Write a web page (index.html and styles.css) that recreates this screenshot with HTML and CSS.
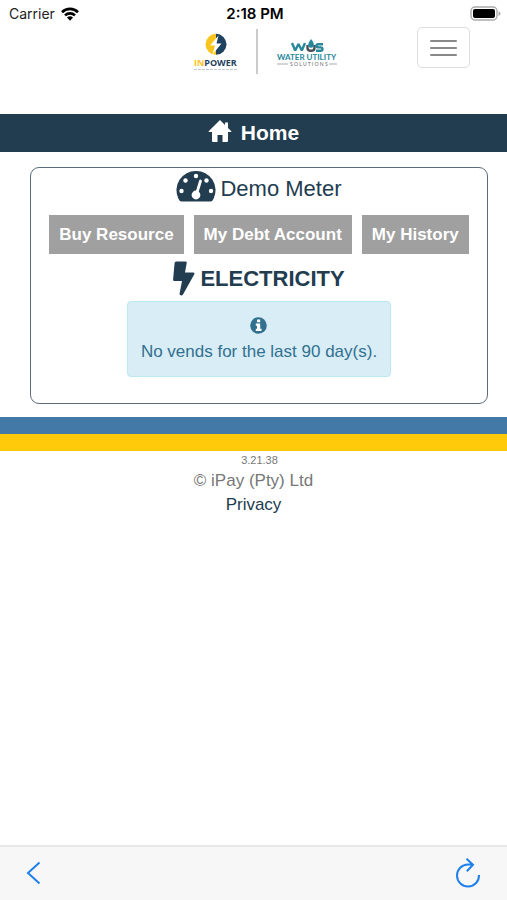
FILE: index.html
```html
<!DOCTYPE html>
<html lang="en">
<head>
<meta charset="utf-8">
<meta name="viewport" content="width=device-width, initial-scale=1">
<title>Home</title>
<link rel="stylesheet" href="styles.css">
</head>
<body>
<div class="status">
  <div class="carrier">Carrier
    <svg width="18" height="14" viewBox="0 0 18 14" aria-hidden="true"><g fill="none" stroke="#000" stroke-width="2.6"><path d="M1 5.2a11.4 11.4 0 0 1 16 0"/><path d="M4 8.4a7.2 7.2 0 0 1 10 0"/></g><path d="M6 10.6a4.4 4.4 0 0 1 6 0L9 13.8z"/></svg>
  </div>
  <div class="clock">2:18 PM</div>
  <svg class="battery" width="31" height="15" viewBox="0 0 31 15" aria-hidden="true"><rect x="1" y="1" width="26" height="13" rx="4" fill="#fff" stroke="#aaa" stroke-width="1.4"/><rect x="3" y="3" width="22" height="9" rx="2"/><path d="M28.5 5v5q2-1 2-2.5T28.500 5z" fill="#aaa"/></svg>
</div>
<header class="header">
  <a class="brand" href="#" aria-label="InPower and Water Utility Solutions">
    <svg width="46" height="38" viewBox="0 0 46 38">
      <path d="M24 .8a10.500 10.500 0 0 0 0 21z" fill="#f9c51d"/><path d="M24 .8a10.500 10.500 0 0 1 0 21z" fill="#1f4260"/>
      <path d="M26.500 2.500l-8.500 10h5l-2.500 9 9-11h-5z" fill="#fff"/>
      <text class="inpower" x="2" y="33" fill="#f9c51d">IN<tspan fill="#1f4260">POWER</tspan></text>
      <path d="M2 36.500h43" stroke="#c3c9d0" stroke-dasharray="3 1"/>
    </svg>
    <span class="divider"></span>
    <svg width="62" height="32" viewBox="0 0 62 32">
      <g fill="none" stroke-width="2.400"><path d="M16 7l3.200 7.500L22.500 8l3.300 6.500L29 7" stroke="#28879a" stroke-linejoin="bevel"/><path d="M31.500 9v3q0 2.800 3.500 2.800" stroke="#484e55"/><path d="M35 14.800q3.500 0 3.500-2.800V9" stroke="#484e55"/><path d="M47 8.200h-4.500q-2 0-2 1.600t2 1.600h2q2 0 2 1.700t-2 1.700H40" stroke="#28879a"/></g>
      <path d="M35 3q4 4.800 2.600 7.300a3 3 0 0 1-5.200 0Q31.300 7.800 35 3z" fill="#28879a"/>
      <text class="water" x="1" y="24">WATER UTILITY</text>
      <text class="solutions" x="14" y="30">S O L U T I O N S</text>
      <path d="M1 28h11M53 28h8" stroke="#aaa"/>
    </svg>
  </a>
  <button class="toggle" type="button" aria-label="Menu"><span></span><span></span><span></span></button>
</header>
<h1 class="title">
  <svg width="24" height="22" viewBox="0 0 24 22" aria-hidden="true"><path d="M12 0L.7 11.300q-.5.700.3.700H4v9q0 1 1 1h4.500v-7h5v7H19q1 0 1-1v-9h3q.8 0 .3-.700L20 8V2.500h-3V5z" fill="#fff"/></svg>
  Home
</h1>
<main class="panel">
  <h2 class="meter">
    <svg width="40" height="31" viewBox="0 0 40 31" aria-hidden="true"><path d="M20 0A19.300 19.300 0 0 0 2.300 27.500Q3.500 30.500 5.500 30.500h29q2 0 3.200-3A19.300 19.300 0 0 0 20 0z" fill="#223c50"/><g fill="#fff"><circle cx="5.500" cy="20" r="2.200"/><circle cx="9.500" cy="9.500" r="2.200"/><circle cx="20" cy="5" r="2.200"/><circle cx="30.500" cy="9.500" r="2.200"/><circle cx="35" cy="20" r="2.200"/><circle cx="20" cy="24" r="4.400"/></g><path d="M20.500 23l4-13" stroke="#fff" stroke-width="2.800" stroke-linecap="round"/></svg>
    Demo Meter
  </h2>
  <nav class="actions">
    <button type="button">Buy Resource</button>
    <button type="button">My Debt Account</button>
    <button type="button">My History</button>
  </nav>
  <h3 class="resource">
    <svg width="22" height="35" viewBox="0 0 22 35" aria-hidden="true"><path d="M3 .5h9.500q1.500 0 1.200 1.400L12 11.500h8q2 0 1.300 1.800L10 33.500Q9 35 7.200 34q-.9-.5-.6-1.500L9 20H1.500Q-.1 20 .1 18.300L1.600 2Q1.800.5 3 .5z" fill="#223c50"/></svg>
    ELECTRICITY
  </h3>
  <div class="notice" role="status">
    <svg width="17" height="17" viewBox="0 0 17 17" aria-hidden="true"><circle cx="8.500" cy="8.500" r="8.300" fill="#31708f"/><path d="M7 2.500h3.200v2.700H7zM5.800 6.500h4.400v5.300h1.300V14H5.800v-2.200H7V8.700H5.800z" fill="#fff"/></svg>
    <p>No vends for the last 90 day(s).</p>
  </div>
</main>
<footer class="footer">
  <div class="band blue"></div>
  <div class="band yellow"></div>
  <small>3.21.38</small>
  <p>© iPay (Pty) Ltd</p>
  <a href="#">Privacy</a>
</footer>
<div class="toolbar">
  <button type="button" aria-label="Back"><svg width="16" height="24" viewBox="0 0 16 24"><path d="M13.500 1.500L2 12l11.500 10.500" fill="none" stroke="#1e80ea" stroke-width="2"/></svg></button>
  <button type="button" aria-label="Reload"><svg width="26" height="30" viewBox="0 0 26 30"><path d="M24 17A11 11 0 1 1 13 6.500h4.500M11.500.8L18 6.800l-6.200 6.400" fill="none" stroke="#1e80ea" stroke-width="2"/></svg></button>
</div>
</body>
</html>
```
FILE: styles.css
```css
* { box-sizing: border-box; }
body {
  margin: 0;
  min-height: 100vh;
  display: flex;
  flex-direction: column;
  background: #fff;
  color: #223c50;
  font-family: "Liberation Sans", Arial, sans-serif;
  font-size: 17px;
  line-height: 24px;
}
h1, h2, h3, p { margin: 0; }
button { font: inherit; cursor: pointer; }
svg { display: block; flex: none; }

.status {
  display: grid;
  grid-template-columns: 1fr auto 1fr;
  align-items: center;
  height: 27px;
  padding: 0 6px 0 9px;
  color: #000;
  font-family: Inter, sans-serif;
  font-size: 14px;
}
.carrier { display: flex; align-items: center; gap: 6px; color: #222; }
.clock { font-size: 15px; font-weight: 600; }
.battery { justify-self: end; }

.header {
  display: grid;
  grid-template-columns: 1fr auto 1fr;
  align-items: start;
  height: 87px;
  padding: 0 37px 0 60px;
}
.brand {
  grid-column: 2;
  display: flex;
  align-items: center;
  gap: 18px;
  padding-top: 2px;
}
.divider { width: 2px; height: 45px; background: #ccc; }
.inpower { font: 700 9px "Open Sans", sans-serif; }
.water { font: 700 8px Lato, sans-serif; fill: #28879a; }
.solutions { font: 5px Lato, sans-serif; fill: #666; }
.toggle {
  justify-self: end;
  display: flex;
  flex-direction: column;
  align-items: center;
  justify-content: center;
  gap: 5px;
  width: 53px;
  height: 41px;
  padding: 0;
  background: #fff;
  border: 1px solid #ddd;
  border-radius: 5px;
}
.toggle span { width: 27px; height: 2px; border-radius: 1px; background: #888; }

.title {
  display: flex;
  align-items: center;
  justify-content: center;
  gap: 9px;
  height: 38px;
  background: #223c50;
  color: #fff;
  font-size: 21px;
}
.title svg { margin-bottom: 4px; }

.panel {
  display: flex;
  flex-direction: column;
  align-items: center;
  margin: 15px 19px 13px 30px;
  padding: 2px 0 26px;
  border: 1px solid #5c6b7c;
  border-radius: 9px;
}
.meter {
  display: flex;
  align-items: center;
  gap: 4px;
  height: 36px;
  padding-top: 2px;
  font-size: 22px;
  font-weight: 400;
}
.meter svg { margin-bottom: 6px; }
.actions { display: flex; gap: 10px; padding: 9px 0 7px; }
.actions button {
  height: 39px;
  padding: 0 10px;
  border: 0;
  background: #a0a0a0;
  color: #fff;
  font-weight: 700;
  white-space: nowrap;
}
.resource { display: flex; align-items: center; gap: 5px; font-size: 22px; }
.notice {
  display: flex;
  flex-direction: column;
  align-items: center;
  gap: 6px;
  margin-top: 5px;
  padding: 15px 13px 12px;
  border: 1px solid #bce8f1;
  border-radius: 4px;
  background: #d9edf7;
  color: #31708f;
}

.footer { display: flex; flex-direction: column; align-items: center; color: #777; }
.band { align-self: stretch; height: 17px; }
.blue { background: #4279a6; }
.yellow { background: #ffca0a; }
.footer small { padding-left: 12px; font-size: 11px; line-height: 18px; }
.footer a { color: #223c50; text-decoration: none; }

.toolbar {
  display: flex;
  justify-content: space-between;
  align-items: center;
  height: 55px;
  margin-top: auto;
  padding: 0 26px 2px;
  border-top: 2px solid #e8e8e8;
  background: #f7f7f7;
}
.toolbar button { padding: 0; border: 0; background: none; }
```
